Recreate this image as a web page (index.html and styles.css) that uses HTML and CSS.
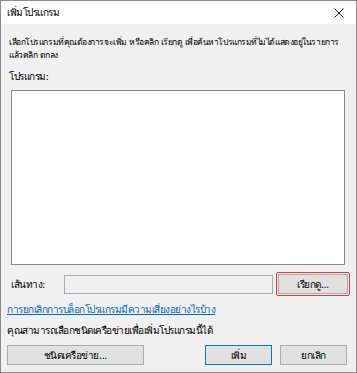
FILE: index.html
```html
<!DOCTYPE html>
<html lang="th">
<head>
    <meta charset="UTF-8">
    <title>เพิ่มโปรแกรม</title>
    <link rel="stylesheet" href="styles.css">
</head>
<body>
    <div class="dialog">
        <div class="titlebar">
            <span class="title">เพิ่มโปรแกรม</span>
            <svg class="close" width="10" height="10" viewBox="0 0 10 10">
                <path d="M0.5 0.5 L9.5 9.5 M9.5 0.5 L0.5 9.5" stroke="#1a1a1a" stroke-width="1" fill="none"/>
            </svg>
        </div>
        <div class="content">
            <p class="intro">เลือกโปรแกรมที่คุณต้องการจะเพิ่ม หรือคลิก เรียกดู เพื่อค้นหาโปรแกรมที่ไม่ได้แสดงอยู่ในรายการ<br>แล้วคลิก ตกลง</p>
            <p class="list-label">โปรแกรม:</p>
            <div class="app-list"></div>
            <div class="path-row">
                <span class="path-label">เส้นทาง:</span>
                <div class="path-input"></div>
                <div class="browse-focus">
                    <button class="btn browse-btn">เรียกดู...</button>
                </div>
            </div>
            <a class="risk-link" href="#">การยกเลิกการบล็อกโปรแกรมมีความเสี่ยงอย่างไรบ้าง</a>
            <p class="network-note">คุณสามารถเลือกชนิดเครือข่ายเพื่อเพิ่มโปรแกรมนี้ได้</p>
            <div class="button-row">
                <button class="btn network-btn">ชนิดเครือข่าย...</button>
                <div class="spacer"></div>
                <button class="btn default-btn">เพิ่ม</button>
                <button class="btn">ยกเลิก</button>
            </div>
        </div>
    </div>
</body>
</html>
```

FILE: styles.css
```css
* {
    margin: 0;
    padding: 0;
    box-sizing: border-box;
}

body {
    font-family: Tahoma, "DejaVu Sans", "Noto Sans", sans-serif;
    font-size: 10px;
    letter-spacing: -0.5px;
    color: #000;
    background: #fff;
}

.dialog {
    width: 357px;
    height: 373px;
    border: 1px solid #8a8a8a;
    display: flex;
    flex-direction: column;
    background: #f0f0f0;
    overflow: hidden;
}

.titlebar {
    height: 23px;
    flex-shrink: 0;
    background: white;
    display: flex;
    align-items: center;
    padding: 0 12px 0 6px;
}

.title {
    flex: 1;
}

.close {
    display: block;
}

.content {
    flex: 1;
    padding: 12px 6px 0 8px;
    display: flex;
    flex-direction: column;
}

.content > * {
    flex-shrink: 0;
}

.intro {
    height: 26px;
    font-size: 8.5px;
    letter-spacing: -0.45px;
    line-height: 13px;
}

.list-label {
    margin-top: 8px;
    height: 13px;
    line-height: 13px;
}

.app-list {
    margin: 7px 5px 0 2px;
    height: 175px;
    background: white;
    border: 1px solid #828790;
}

.path-row {
    display: flex;
    align-items: center;
    height: 24px;
    margin-top: 7px;
}

.path-label {
    width: 55px;
    padding-left: 2px;
}

.path-input {
    width: 209px;
    height: 19px;
    background: #f0f0f0;
    border: 1px solid #acacac;
}

.browse-focus {
    margin-left: 3px;
    border: 1px solid #e8383d;
    border-radius: 2px;
    padding: 1px;
}

.btn {
    font-family: inherit;
    font-size: 10px;
    letter-spacing: inherit;
    height: 20px;
    width: 67px;
    background: #e1e1e1;
    border: 1px solid #adadad;
    color: #000;
}

.browse-btn {
    width: 70px;
}

.risk-link {
    margin-top: 7px;
    height: 14px;
    color: #0066cc;
    line-height: 14px;
    margin-left: -2px;
}

.network-note {
    margin-top: 7px;
    height: 13px;
    line-height: 13px;
    margin-left: -2px;
}

.button-row {
    display: flex;
    margin: 8px 3px 0 -2px;
    gap: 8px;
}

.network-btn {
    width: 137px;
}

.spacer {
    flex: 1;
}

.default-btn {
    border-color: #0078d7;
}
```
